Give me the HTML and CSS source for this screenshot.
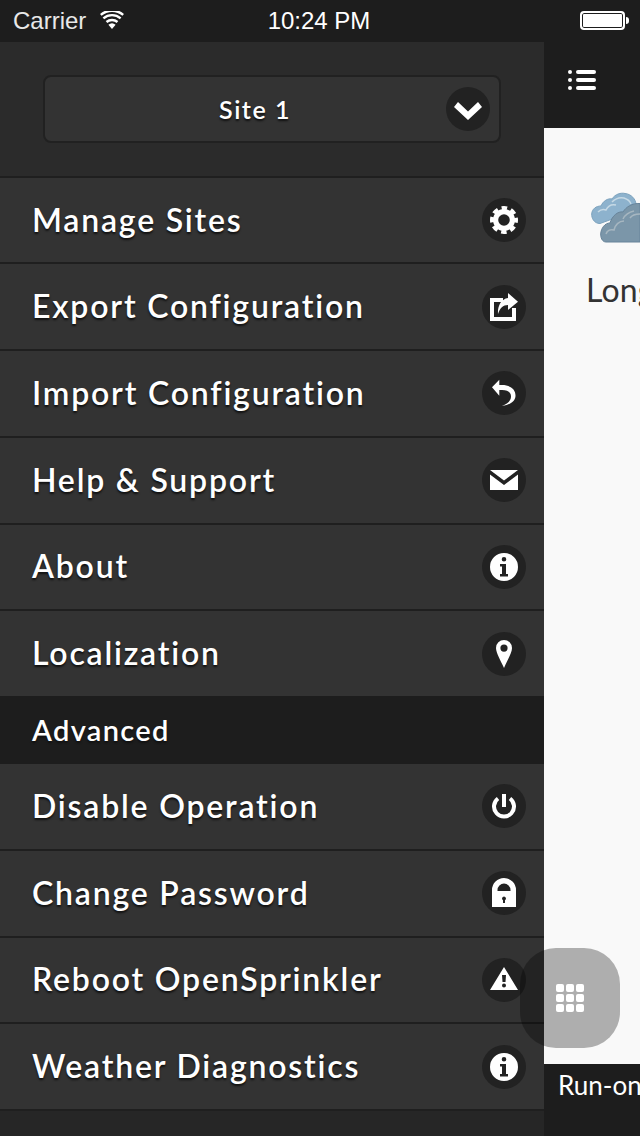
FILE: index.html
```html
<!DOCTYPE html>
<html lang="en">
<head>
<meta charset="utf-8">
<title>OpenSprinkler</title>
<link rel="stylesheet" href="styles.css">
</head>
<body>
<div class="screen">
  <div class="status">
    <div class="status-left">
      <span>Carrier</span>
      <svg class="wifi" viewBox="0 0 24 18"><path d="M12 18l-3.600-4.300a5.600 5.600 0 0 1 7.200 0z" fill="#fff"/><path d="M6.500 11a8.400 8.400 0 0 1 11 0M3.400 7.300a13.200 13.200 0 0 1 17.200 0M.8 3.800a17.400 17.400 0 0 1 22.400 0" fill="none" stroke="#fff" stroke-width="2.400"/></svg>
    </div>
    <div class="status-time">10:24 PM</div>
    <div class="status-right"><span class="battery"></span><span class="nub"></span></div>
  </div>
  <div class="body">
    <aside class="panel">
      <div class="panel-head">
        <div class="select">
          <span class="select-label">Site 1</span>
          <span class="ico select-ico"><svg viewBox="0 0 44 44"><path d="M8 20l4-5 10 9.500 10-9.500 4 5-14 13z" fill="#fff"/></svg></span>
        </div>
      </div>
      <ul class="menu">
        <li class="row"><span class="label">Manage Sites</span><span class="ico"><svg viewBox="0 0 44 44"><circle cx="22" cy="22" r="8.400" fill="none" stroke="#fff" stroke-width="5.200"/><circle cx="22" cy="22" r="11" fill="none" stroke="#fff" stroke-width="6" stroke-dasharray="5 3.640" stroke-dashoffset="2.500"/></svg></span></li>
        <li class="row"><span class="label">Export Configuration</span><span class="ico"><svg viewBox="0 0 44 44"><path d="M21 15H10v19h22v-11" fill="none" stroke="#fff" stroke-width="4"/><path d="M26 8l10 8.700L26 25v-5c-5 0-8 3-10 9-.5-8 3-15 10-16z" fill="#fff"/></svg></span></li>
        <li class="row"><span class="label">Import Configuration</span><span class="ico"><svg viewBox="0 0 44 44"><path d="M17.300 8.700v5.300H20c8 0 13.500 4 13.500 10.500 0 5-4 9-13.500 10.500 5.500-2.500 9-5 9-9.500 0-4-3-6.500-9-6.500h-2.700v5.700L10 16.300z" fill="#fff"/></svg></span></li>
        <li class="row"><span class="label">Help &amp; Support</span><span class="ico"><svg viewBox="0 0 44 44"><path d="M8 12h28L22 22.500zM8 16.500L22 27l14-10.500V32H8z" fill="#fff"/></svg></span></li>
        <li class="row"><span class="label">About</span><span class="ico"><svg viewBox="0 0 44 44"><use href="#info"/></svg></span></li>
        <li class="row row-last"><span class="label">Localization</span><span class="ico"><svg viewBox="0 0 44 44"><path fill-rule="evenodd" d="M22 8a8 8 0 0 1 8 8c0 5-5 13-8 20-3-7-8-15-8-20a8 8 0 0 1 8-8zm0 4.500a3.600 3.600 0 1 0 0 7.200 3.600 3.600 0 0 0 0-7.200z" fill="#fff"/></svg></span></li>
      </ul>
      <div class="divider">Advanced</div>
      <ul class="menu">
        <li class="row"><span class="label">Disable Operation</span><span class="ico"><svg viewBox="0 0 44 44"><path d="M16 14.500a10 10 0 1 0 12 0M22 10v13" fill="none" stroke="#fff" stroke-width="4"/></svg></span></li>
        <li class="row"><span class="label">Change Password</span><span class="ico"><svg viewBox="0 0 44 44"><path fill-rule="evenodd" d="M10 21v-2a12 12 0 0 1 24 0v2zm5.500-1h13v-1a6.500 6.500 0 0 0-13 0z" fill="#fff"/><path fill-rule="evenodd" d="M10 21h24v15H10zM22 25.500a2 2 0 0 0-1 3.700V32h2v-2.800a2 2 0 0 0-1-3.700z" fill="#fff"/></svg></span></li>
        <li class="row"><span class="label">Reboot OpenSprinkler</span><span class="ico"><svg viewBox="0 0 44 44"><path fill-rule="evenodd" d="M22 9l14 23H8zM20 17l.5 7h3l.5-7zM22 25.500a2 2 0 1 0 0 4 2 2 0 0 0 0-4z" fill="#fff"/></svg></span></li>
        <li class="row"><span class="label">Weather Diagnostics</span><span class="ico"><svg viewBox="0 0 44 44"><use href="#info"/></svg></span></li>
      </ul>
    </aside>
    <main class="main">
      <div class="topbar">
        <svg class="list-ico" viewBox="0 0 28 20"><circle cx="2" cy="2" r="2" fill="#fff"/><circle cx="2" cy="10" r="2" fill="#fff"/><circle cx="2" cy="18" r="2" fill="#fff"/><rect x="8" y="0" width="20" height="4" rx="2" fill="#fff"/><rect x="8" y="8" width="20" height="4" rx="2" fill="#fff"/><rect x="8" y="16" width="20" height="4" rx="2" fill="#fff"/></svg>
      </div>
      <div class="content">
        <svg class="cloud" viewBox="0 0 50 55">
          <path d="M10 33.500C4 33.500 1.500 28 1.700 24 2 19 6 16 11 16c2-5 7-8 11-7 3-5 9-6.500 13-5.500C41 4 46 9 46 15l-6 10-15 3z" fill="#8db2cd" stroke="#7ca2bd"/>
          <path d="M8 22c2-2 5-3 8-2 2-4 6-6 10-5M22 12c3-3 8-5 12-4 3 1 6 3 7 6" fill="none" stroke="#c6d9e5" stroke-width="1.500"/>
          <path d="M16 52c-4 0-5.500-5-5.300-8 .3-6 4.300-11 9.300-11 2-7 8-12 13-11 3-5 9-9 17-8.500V52z" fill="#7b96a9" stroke="#68849a"/>
          <path d="M16 44c1-3 4-5 8-4 1-5 5-9 10-9M33 29c2-4 6-7 11-8M40 28c2-3 5-4 10-4" fill="none" stroke="#a6b6c0" stroke-width="1.500"/>
        </svg>
        <div class="long">Long</div>
      </div>
      <div class="footer">Run-on</div>
    </main>
  </div>
  <div class="fab"><svg viewBox="0 0 28 28"><rect x="0" y="0" width="8" height="8" rx="2"/><rect x="10" y="0" width="8" height="8" rx="2"/><rect x="20" y="0" width="8" height="8" rx="2"/><rect x="0" y="10" width="8" height="8" rx="2"/><rect x="10" y="10" width="8" height="8" rx="2"/><rect x="20" y="10" width="8" height="8" rx="2"/><rect x="0" y="20" width="8" height="8" rx="2"/><rect x="10" y="20" width="8" height="8" rx="2"/><rect x="20" y="20" width="8" height="8" rx="2"/></svg></div>
  <svg class="defs" width="0" height="0"><defs><g id="info"><path fill-rule="evenodd" d="M22 8a14 14 0 1 1 0 28 14 14 0 0 1 0-28zM22 12a2.300 2.300 0 1 0 0 4.600 2.300 2.300 0 0 0 0-4.600zM18 19v2.400h2V29h-2v2.400h8V29h-2V19z" fill="#fff"/></g></defs></svg>
</div>
</body>
</html>
```
FILE: styles.css
```css
* { box-sizing: border-box; }
html, body { margin: 0; padding: 0; }
body { width: 640px; height: 1136px; overflow: hidden; background: #1d1d1d; font-family: "Lato", sans-serif; }
.screen { position: relative; width: 640px; height: 1136px; overflow: hidden; display: flex; flex-direction: column; }

.status { height: 42px; flex: none; background: #1d1d1d; color: #fff; display: flex; align-items: center; justify-content: space-between; padding: 0 11px 0 13px; font-family: "Liberation Sans", sans-serif; font-size: 24px; position: relative; }
.status-left { display: flex; align-items: center; gap: 14px; color: #e8e8e8; }
.wifi { width: 24px; height: 18px; margin-top: -2px; }
.status-time { position: absolute; left: 0; right: 2px; text-align: center; }
.status-right { display: flex; align-items: center; margin-top: -2px; }
.battery { width: 45px; height: 19px; border: 2px solid #fff; background: #fff; border-radius: 4px; box-shadow: inset 0 0 0 1px #1d1d1d; }
.nub { width: 3px; height: 7px; background: #fff; border-radius: 0 3px 3px 0; margin-left: 1px; }

.body { flex: 1; display: flex; min-height: 0; }
.panel { width: 544px; flex: none; background: #262626; text-shadow: 0 2px 2px #111; color: #fff; }
.panel-head { height: 135.750px; background: #2b2b2b; padding: 33px 43px 0; border-bottom: 2px solid #1f1f1f; }
.select { height: 68px; border: 2px solid #212121; border-radius: 8px; background: #333; display: flex; align-items: center; justify-content: center; position: relative; font-size: 25px; font-weight: 600; letter-spacing: 1.500px; padding-right: 34px; }
.select-ico { position: absolute; right: 9px; top: 10px; }

.menu { list-style: none; margin: 0; padding: 0; }
.row { height: 86.700px; background: #333; border-bottom: 2px solid #1f1f1f; display: flex; align-items: center; justify-content: space-between; padding: 0 18px 0 32px; font-size: 32px; font-weight: 600; letter-spacing: 1.800px; }
.row-last { height: 84.750px; border-bottom: 0; }
.label { padding-bottom: 2px; }
.ico { width: 44px; height: 44px; border-radius: 50%; background: #222; display: block; flex: none; }
.ico svg { display: block; width: 44px; height: 44px; }
.divider { height: 68.200px; background: #1d1d1d; display: flex; align-items: center; padding: 0 0 2px 32px; font-size: 29px; font-weight: 600; letter-spacing: 1.350px; }

.main { flex: 1; min-width: 0; display: flex; flex-direction: column; overflow: hidden; }
.topbar { height: 86px; flex: none; background: #1d1d1d; padding: 28px 0 0 24px; }
.list-ico { width: 28px; height: 20px; display: block; }
.content { flex: 1; background: #f9f9f9; padding: 62px 0 0 46px; white-space: nowrap; }
.cloud { width: 50px; height: 55px; display: block; }
.long { font-family: "Lato", sans-serif; font-size: 32px; letter-spacing: .2px; color: #333; margin-top: 25px; margin-left: -4px; }
.footer { height: 72px; flex: none; background: #1d1d1d; color: #fff; font-size: 26px; padding: 5px 0 0 14px; white-space: nowrap; }

.fab { position: absolute; left: 520px; top: 948px; width: 100px; height: 100px; border-radius: 36px; background: rgba(0,0,0,.3); display: flex; align-items: center; justify-content: center; }
.fab svg { width: 28px; height: 28px; fill: #fff; }
.defs { position: absolute; }
```
